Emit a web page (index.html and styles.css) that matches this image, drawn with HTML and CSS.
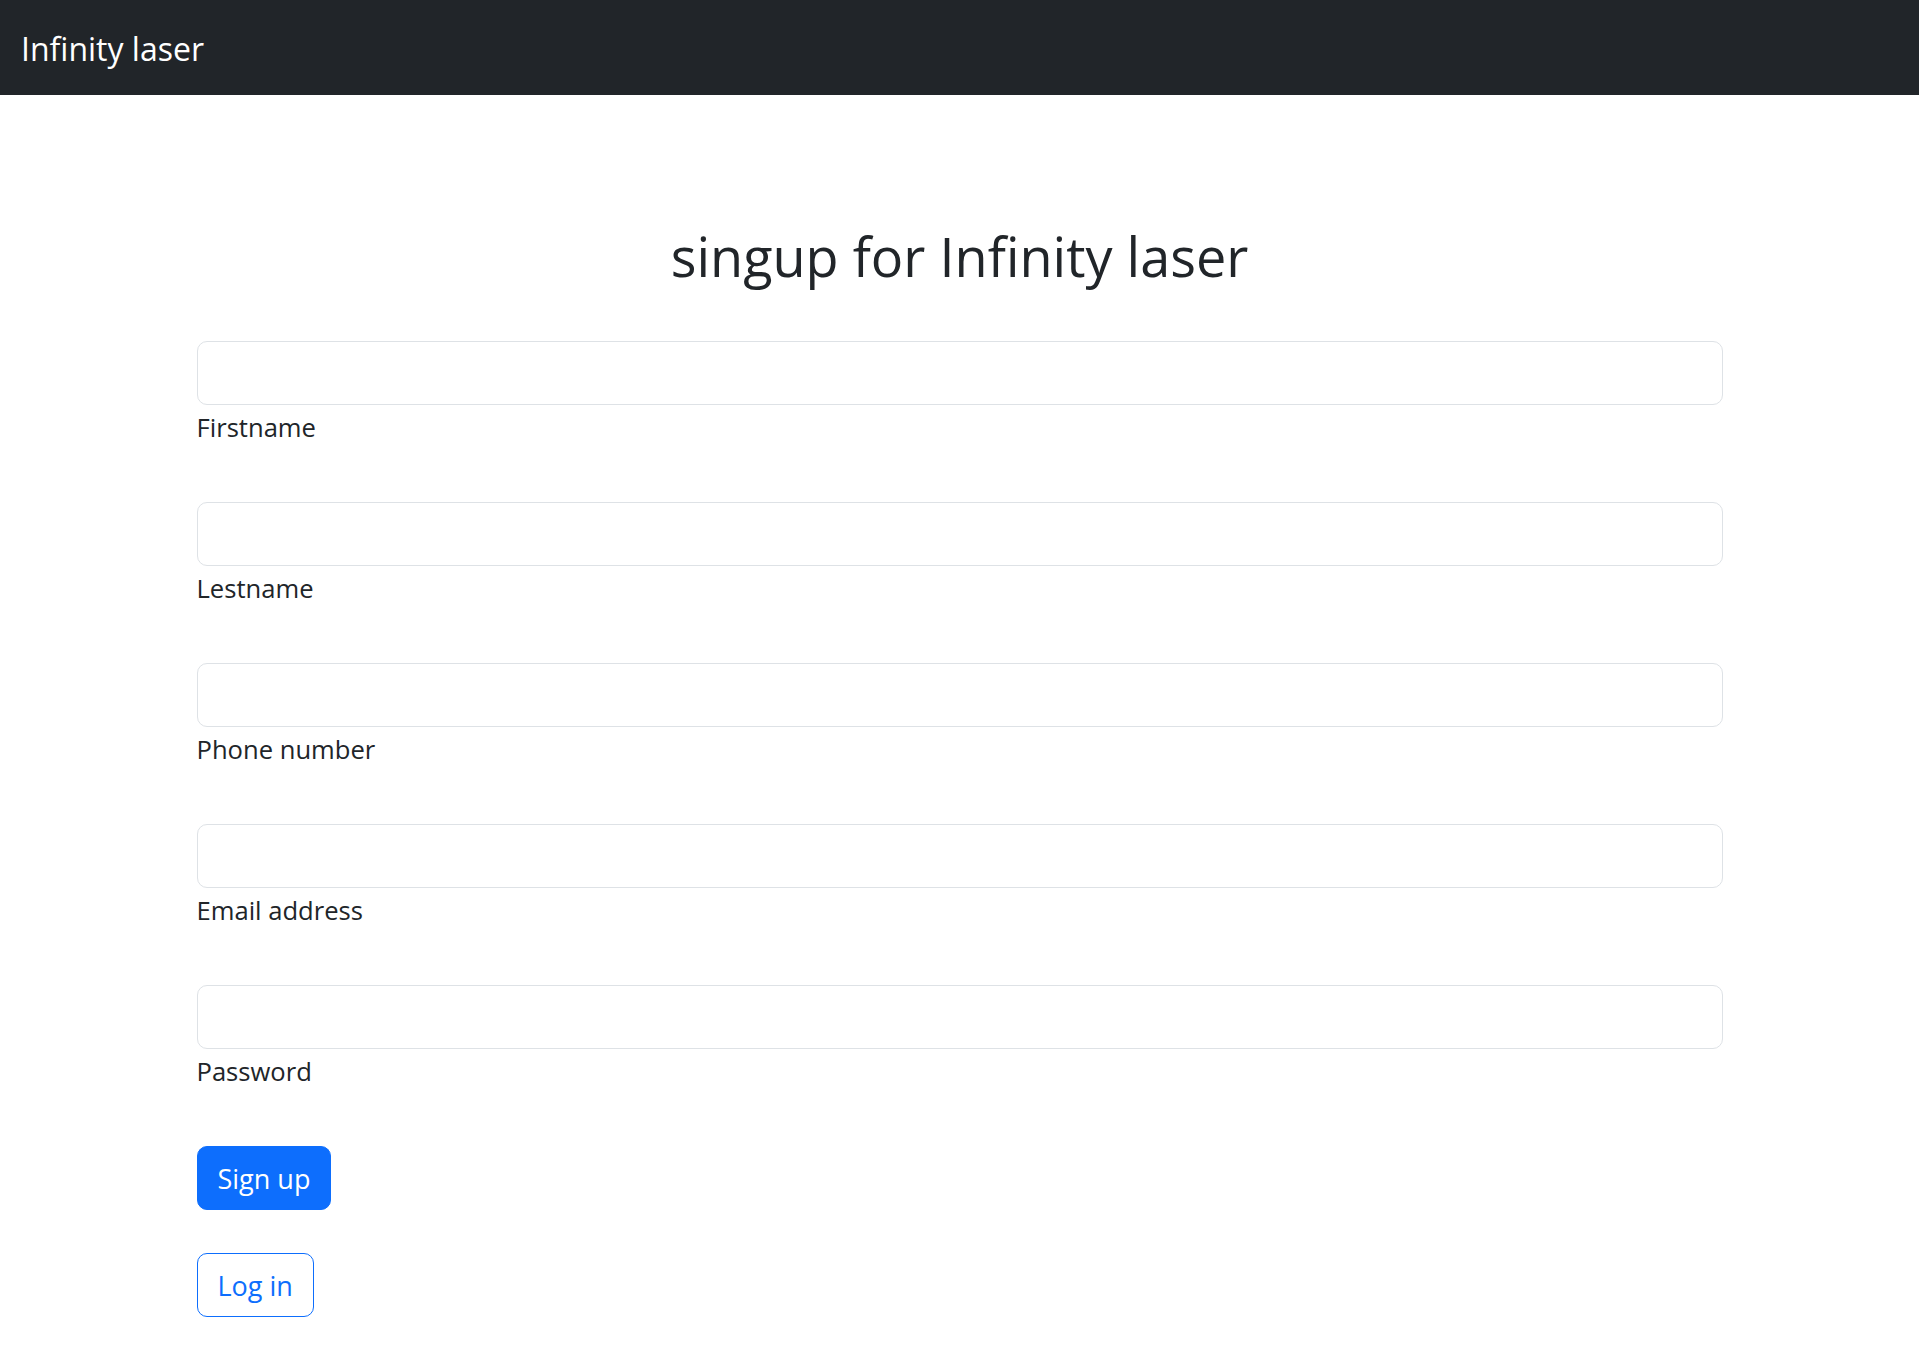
FILE: index.html
```html
<!DOCTYPE html>
<html lang="en">
<head>
<meta charset="utf-8">
<title>Infinity laser</title>
<link rel="stylesheet" href="styles.css">
</head>
<body>
<nav class="navbar">
  <a class="brand" href="#">Infinity laser</a>
</nav>
<main class="container">
  <h1 class="title">singup for Infinity laser</h1>
  <form class="form">
    <div class="field">
      <input class="control" type="text">
      <label class="label">Firstname</label>
    </div>
    <div class="field">
      <input class="control" type="text">
      <label class="label">Lestname</label>
    </div>
    <div class="field">
      <input class="control" type="text">
      <label class="label">Phone number</label>
    </div>
    <div class="field">
      <input class="control" type="email">
      <label class="label">Email address</label>
    </div>
    <div class="field">
      <input class="control" type="password">
      <label class="label">Password</label>
    </div>
    <div class="actions">
      <button class="btn btn-primary" type="button">Sign up</button>
      <button class="btn btn-outline" type="button">Log in</button>
    </div>
  </form>
</main>
</body>
</html>
```
FILE: styles.css
```css
* { box-sizing: border-box; }
html, body { margin: 0; padding: 0; }
body {
  font-family: "Open Sans", "Noto Sans", sans-serif;
  color: #212529;
  background: #fff;
}
.navbar {
  height: 95px;
  background: #212529;
  display: flex;
  align-items: center;
  padding-left: 21px;
}
.brand {
  color: #fff;
  text-decoration: none;
  font-size: 32px;
  line-height: 1;
  padding-top: 3px;
}
.container {
  width: 1526px;
  margin: 0 auto;
}
.title {
  margin: 0;
  padding-top: 121px;
  padding-bottom: 45px;
  text-align: center;
  font-weight: 500;
  font-size: 54px;
  line-height: 80px;
}
.form {
  display: flex;
  flex-direction: column;
}
.field {
  display: flex;
  flex-direction: column;
  margin-bottom: 54px;
}
.control {
  display: block;
  width: 100%;
  height: 64px;
  border: 1px solid #dee2e6;
  border-radius: 10px;
  background: #fff;
  font: inherit;
  font-size: 27px;
  padding: 10px 20px;
}
.label {
  font-size: 25.6px;
  line-height: 41px;
  padding-top: 2px;
}
.actions {
  display: flex;
  flex-direction: column;
  align-items: flex-start;
  gap: 43px;
}
.btn {
  font-family: inherit;
  font-size: 27px;
  line-height: 41px;
  height: 64px;
  padding: 0 20px;
  border-radius: 10px;
  border: 1px solid #0d6efd;
  cursor: pointer;
}
.btn-primary {
  background: #0d6efd;
  color: #fff;
}
.btn-outline {
  background: #fff;
  color: #0d6efd;
}
```
